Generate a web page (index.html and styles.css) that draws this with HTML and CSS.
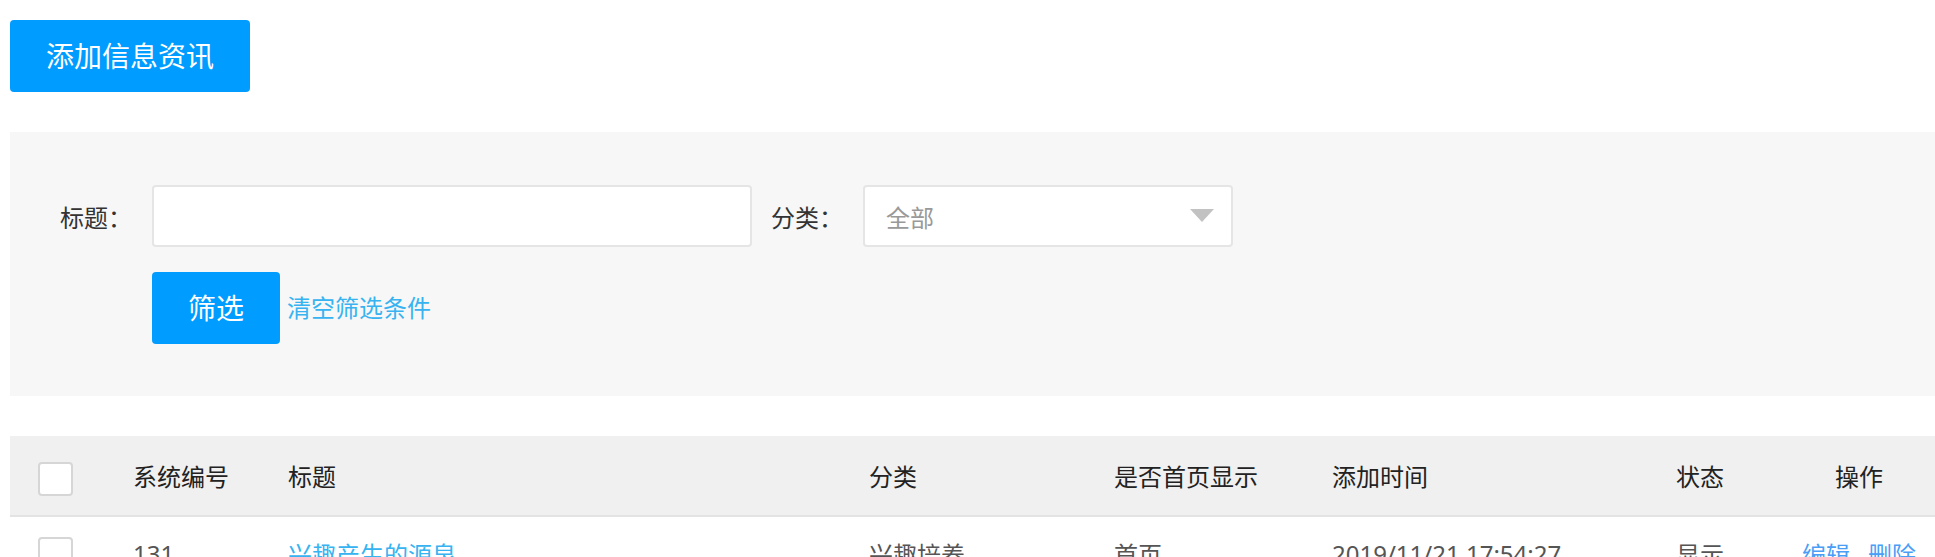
FILE: index.html
```html
<!DOCTYPE html>
<html lang="zh-CN">
<head>
<meta charset="utf-8">
<title>信息资讯</title>
<link rel="stylesheet" href="styles.css">
</head>
<body>
<div class="page">
  <div class="toolbar">
    <button class="btn btn-add">添加信息资讯</button>
  </div>

  <div class="filter">
    <div class="filter-row">
      <label class="filter-label">标题：</label>
      <input class="filter-input" type="text">
      <label class="filter-label">分类：</label>
      <div class="filter-select">
        <span class="select-value">全部</span>
        <span class="select-arrow"></span>
      </div>
    </div>
    <div class="filter-actions">
      <button class="btn btn-filter">筛选</button>
      <a class="link-clear">清空筛选条件</a>
    </div>
  </div>

  <table class="data-table">
    <colgroup>
      <col class="c-check"><col class="c-id"><col class="c-title"><col class="c-cat">
      <col class="c-home"><col class="c-time"><col class="c-state"><col class="c-ops">
    </colgroup>
    <thead>
      <tr>
        <th class="cell-check"><span class="checkbox"></span></th>
        <th>系统编号</th>
        <th>标题</th>
        <th>分类</th>
        <th>是否首页显示</th>
        <th>添加时间</th>
        <th>状态</th>
        <th class="cell-ops">操作</th>
      </tr>
    </thead>
    <tbody>
      <tr>
        <td class="cell-check"><span class="checkbox"></span></td>
        <td>131</td>
        <td><a class="link-title">兴趣产生的源泉</a></td>
        <td>兴趣培养</td>
        <td>首页</td>
        <td>2019/11/21 17:54:27</td>
        <td>显示</td>
        <td class="cell-ops"><a class="link-op">编辑</a><a class="link-op">删除</a></td>
      </tr>
    </tbody>
  </table>
</div>
</body>
</html>
```

FILE: styles.css
```css
* {
  box-sizing: border-box;
}

html, body {
  margin: 0;
  padding: 0;
  background: #ffffff;
}

body {
  font-family: "Noto Sans", "Noto Sans CJK SC", sans-serif;
  font-size: 24px;
  color: #333333;
  overflow: hidden;
}

.page {
  padding: 20px 0 0 10px;
}

.btn {
  border: none;
  border-radius: 4px;
  background: #009cff;
  color: #ffffff;
  font-family: "Noto Sans", "Noto Sans CJK SC", sans-serif;
  font-size: 28px;
  line-height: 1;
  display: flex;
  align-items: center;
  justify-content: center;
  padding: 0;
  cursor: pointer;
}

.toolbar {
  margin-bottom: 40px;
}

.btn-add {
  width: 240px;
  height: 72px;
}

.filter {
  background: #f7f7f7;
  padding: 53px 0 52px 50px;
}

.filter-row {
  display: flex;
  align-items: center;
  height: 62px;
}

.filter-label {
  width: 72px;
  margin-right: 20px;
  font-size: 24px;
  color: #333333;
  white-space: nowrap;
}

.filter-input {
  width: 600px;
  height: 62px;
  margin: 0 19px 0 0;
  border: 2px solid #e5e5e5;
  border-radius: 4px;
  background: #ffffff;
  outline: none;
  font-size: 24px;
}

.filter-select {
  width: 370px;
  height: 62px;
  border: 2px solid #e5e5e5;
  border-radius: 4px;
  background: #ffffff;
  display: flex;
  align-items: center;
  justify-content: space-between;
  padding: 0 17px 0 21px;
}

.select-value {
  color: #999999;
  font-size: 24px;
}

.select-arrow {
  width: 0;
  height: 0;
  border-left: 12px solid transparent;
  border-right: 12px solid transparent;
  border-top: 13px solid #c2c2c2;
  margin-top: -1px;
}

.filter-actions {
  display: flex;
  align-items: center;
  gap: 7px;
  margin-top: 25px;
  padding-left: 92px;
  height: 72px;
}

.btn-filter {
  width: 128px;
  height: 72px;
}

.link-clear {
  color: #36b3f0;
  font-size: 24px;
  cursor: pointer;
  margin-top: -4px;
}

.data-table {
  margin-top: 40px;
  width: 1925px;
  border-collapse: collapse;
  table-layout: fixed;
}

.c-check { width: 123px; }
.c-id { width: 155px; }
.c-title { width: 581px; }
.c-cat { width: 245px; }
.c-home { width: 218px; }
.c-time { width: 344px; }
.c-state { width: 107px; }
.c-ops { width: 152px; }

.data-table th {
  height: 80px;
  background: #f0f0f0;
  border-bottom: 2px solid #e3e3e3;
  font-weight: normal;
  text-align: left;
  padding: 0;
  color: #222222;
  font-size: 24px;
  vertical-align: middle;
}

.data-table td {
  height: 74px;
  padding: 0;
  color: #555555;
  font-size: 24px;
  vertical-align: middle;
  white-space: nowrap;
}

.data-table .cell-check {
  padding-left: 28px;
}

.data-table th.cell-check {
  padding-top: 6px;
}

.data-table .cell-ops {
  text-align: center;
}

.checkbox {
  display: block;
  width: 35px;
  height: 34px;
  border: 2px solid #d6d6d6;
  border-radius: 4px;
  background: #ffffff;
}

.link-title {
  color: #36b3f0;
  cursor: pointer;
}

.link-op {
  color: #4a9ef5;
  cursor: pointer;
}

.link-op + .link-op {
  margin-left: 18px;
}
```
